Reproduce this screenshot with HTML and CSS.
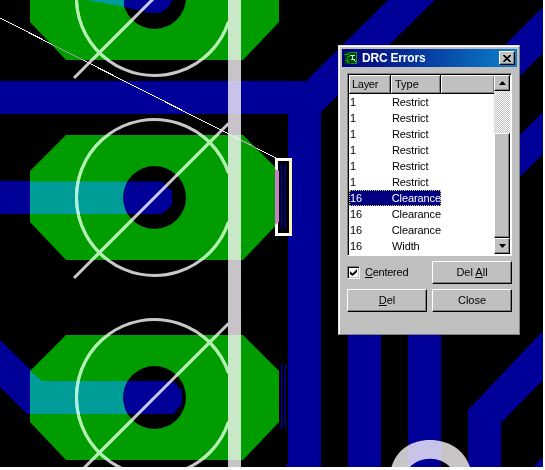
FILE: index.html
```
<!DOCTYPE html>
<html lang="en">
<head>
<meta charset="utf-8">
<title>DRC Errors</title>
<link rel="stylesheet" href="styles.css">
</head>
<body>
<main class="workspace">
<svg class="board" width="543" height="467" viewBox="0 0 543 467">
  <defs>
    <clipPath id="pad-clip"><path clip-rule="evenodd" d="M30 171L66 135H243L279 171V222L243 260H66L30 222ZM123 197.500A31.500 31.500 0 1 0 186 197.500A31.500 31.500 0 1 0 123 197.500Z"/></clipPath>
    <pattern id="hatch" width="6" height="5" patternUnits="userSpaceOnUse" x="281" y="364"><path d="M.5 0V5M4.500 0V5M1 4L4 1" stroke="#0000a8" fill="none"/></pattern>
    <g id="pad">
      <path fill="#009c00" d="M30 171L66 135H243L279 171V222L243 260H66L30 222Z"/>
      <circle cx="154.500" cy="197.500" r="31.500" fill="#000"/>
    </g>
    <g id="strokes" fill="none" stroke-width="3">
      <path d="M228.500 173A78 78 0 1 0 228.500 222"/>
      <path d="M74 278L228.500 123.500"/>
    </g>
    <g id="outline">
      <use href="#strokes" stroke="#c8c8c8"/>
      <g clip-path="url(#pad-clip)"><use href="#strokes" stroke="#b0dcb0"/></g>
    </g>
  </defs>
  <rect width="543" height="467" fill="#000"/>
  <g class="traces">
    <path d="M0 81H302L305 82L388 0H435L321 112V467H285L288 463V114H0Z"/>
    <path d="M0 181H162L172 191V205L162 214H0Z"/>
    <path d="M0 340L42 381H173L183 391V404L173 414H27L0 387Z"/>
    <path d="M348 330H381V467H348ZM408 330H441V467H408Z"/>
    <path d="M500 50L543 7V53L500 96ZM500 155L543 112V154L500 197Z"/>
    <path d="M468 410L543 331V380L501 423V467H468ZM533 467L543 457V467Z"/>
  </g>
  <use href="#pad" y="-200"/>
  <use href="#pad"/>
  <use href="#pad" y="200"/>
  <path fill="#009c98" d="M30 181.500H127.500Q119 197.500 127.500 214H30Z"/>
  <path fill="#009c98" d="M30 371L42 381H127.500Q119 397.500 127.500 414H30Z"/>
  <path fill="#009c98" d="M86 0H124V7Z"/>
  <g class="traces">
    <path d="M127.500 181.500H162L172 191V205L162 214H127.500Q119 197.500 127.500 181.500Z"/>
    <path d="M127.500 381H173L182 391V404L173 414H127.500Q119 397.500 127.500 381Z"/>
    <path d="M124 0V7L151 13H160L169 7L172 0Z"/>
  </g>
  <g class="overlay">
    <use href="#outline" y="-200"/>
    <use href="#outline"/>
    <use href="#outline" y="200"/>
    <path fill="#c8c3c8" d="M228 0H241V467H228Z"/>
    <path fill="#c8c4c8" d="M391.500 467C397 449 412 440 430 440S464 449 470 467H450C440 456 420 456 410 467Z"/>
  </g>
  <path d="M0 18L276 158" stroke="#eee" fill="none" shape-rendering="crispEdges"/>
  <path d="M52 44.400L83 60.100M241 140.200L257 148.400" stroke="#a0a0a0" fill="none" shape-rendering="crispEdges"/>
  <rect x="281" y="364" width="6" height="65" fill="url(#hatch)"/>
  <rect x="275" y="158" width="17" height="78" fill="#000"/>
  <rect x="281" y="164" width="6" height="65" fill="url(#hatch)"/>
  <rect x="276.500" y="159.500" width="14" height="75" fill="none" stroke="#fff" stroke-width="3"/>
  <path fill="#c880c8" d="M275 169L279 171V222L275 225Z"/>
  <path fill="#f8f4b0" d="M289 161H292V234H289Z"/>
</svg>

<section class="dialog">
  <header class="titlebar">
    <svg class="app-icon" width="14" height="14" viewBox="0 0 14 14"><path fill="#004000" d="M1 1H13V13H1Z"/><path fill="none" stroke="#009828" d="M0 3.500H5V1M3.500 12V5.500H6M1 9.500H5V13M12.500 1V12.500H7M6 1.500H12"/><path fill="none" stroke="#b8f0c8" d="M6 4.500H11M8.500 9V4M7 8.500H11M9 8L12 11"/></svg>
    <h1>DRC Errors</h1>
    <button class="close" aria-label="Close dialog"><svg width="8" height="7" viewBox="0 0 8 7"><path d="M.5 0L7.500 7M7.500 0L.5 7" stroke="#000" stroke-width="1.600"/></svg></button>
  </header>
  <div class="list">
    <div class="table">
      <div class="head"><span>Layer</span><span>Type</span><span></span></div>
      <div class="row"><span>1</span><span>Restrict</span></div>
      <div class="row"><span>1</span><span>Restrict</span></div>
      <div class="row"><span>1</span><span>Restrict</span></div>
      <div class="row"><span>1</span><span>Restrict</span></div>
      <div class="row"><span>1</span><span>Restrict</span></div>
      <div class="row"><span>1</span><span>Restrict</span></div>
      <div class="row selected"><span>16</span><span>Clearance</span></div>
      <div class="row"><span>16</span><span>Clearance</span></div>
      <div class="row"><span>16</span><span>Clearance</span></div>
      <div class="row"><span>16</span><span>Width</span></div>
    </div>
    <div class="scrollbar">
      <div class="arrow"><svg width="7" height="4" viewBox="0 0 7 4"><path d="M0 4L3.500 0L7 4Z"/></svg></div>
      <div class="track"></div>
      <div class="thumb"></div>
      <div class="arrow"><svg width="7" height="4" viewBox="0 0 7 4"><path d="M0 0L3.500 4L7 0Z"/></svg></div>
    </div>
  </div>
  <div class="actions">
    <label class="check"><span class="box"><svg width="7" height="7" viewBox="0 0 7 7"><path d="M0 2L2.500 4.500L7 0V3L2.500 7L0 5Z"/></svg></span><span><u>C</u>entered</span></label>
    <button class="btn">Del <u>A</u>ll</button>
    <button class="btn"><u>D</u>el</button>
    <button class="btn">Close</button>
  </div>
</section>
</main>
</body>
</html>
```
FILE: styles.css
```
* { box-sizing: border-box; }
body { margin: 0; background: #fff; font: 11px/16px "Liberation Sans", Arial, sans-serif; color: #000; overflow: hidden; }
.workspace { position: relative; width: 543px; height: 467px; }
.board { display: block; }
.traces { fill: #000098; }
.overlay { mix-blend-mode: screen; }

.dialog {
  position: absolute; left: 338px; top: 45px; width: 182px; height: 290px;
  padding: 3px 2px 0 3px; background: #c0c0c0;
  border: 1px solid; border-color: #e0e0e0 #808080 #808080 #e0e0e0;
  box-shadow: inset 1px 1px #fff;
}
.titlebar { display: flex; align-items: center; height: 18px; padding: 0 2px; background: linear-gradient(90deg, #000078, #0c80cc); }
.app-icon { display: block; }
.titlebar h1 { flex: 1; margin: 0 0 0 4px; font-size: 12px; line-height: 18px; font-weight: bold; letter-spacing: -.2px; color: #fff; }
button { padding: 0; font: inherit; color: #000; background: #c0c0c0; border-radius: 0; }
.close {
  display: grid; place-items: center; width: 16px; height: 14px;
  border: 1px solid; border-color: #fff #000 #000 #fff; box-shadow: inset -1px -1px #808080;
}

.list {
  display: flex; width: 165px; height: 183px; margin: 6px 0 0 5px; background: #fff;
  border: 1px solid; border-color: #808080 #fff #fff #808080; padding: 1px 1px 0 1px;
  box-shadow: inset 1px 1px #000;
}
.table { width: 145px; }
.head { display: flex; height: 19px; background: #c0c0c0; border-bottom: 1px solid #000; }
.head span { padding-left: 4px; line-height: 19px; height: 18px; border-right: 1px solid #000; box-shadow: inset 1px 1px #fff, inset -1px -1px #808080; }
.head span:nth-child(1) { width: 42px; padding-left: 3px; letter-spacing: -.3px; }
.head span:nth-child(2) { width: 50px; }
.head span:nth-child(3) { flex: 1; border-right: 0; }
.row { display: flex; width: 92px; height: 16px; line-height: 16px; white-space: nowrap; }
.row span:first-child { width: 43px; padding-left: 1px; }
.row span:last-child { letter-spacing: -.1px; }
.selected { background: #000080; color: #fff; outline: 1px dotted #d0d070; outline-offset: -1px; }

.scrollbar { display: flex; flex-direction: column; width: 16px; height: 179px; }
.arrow { display: grid; place-items: center; height: 16px; }
.arrow, .thumb { background: #c0c0c0; border: 1px solid; border-color: #fff #000 #000 #fff; box-shadow: inset -1px -1px #808080; }
.track { height: 42px; background: repeating-conic-gradient(#fff 0 25%, #c0c0c0 0 50%) 0 0 / 2px 2px; }
.thumb { flex: 1; }

.actions { display: grid; grid-template-columns: 80px 80px; grid-template-rows: 23px 23px; gap: 5px; margin: 5px 0 0 5px; }
.check { display: flex; align-items: center; gap: 5px; height: 22px; letter-spacing: -.25px; }
.box {
  display: grid; place-items: center; width: 13px; height: 13px; background: #fff;
  border: 1px solid; border-color: #808080 #fff #fff #808080; box-shadow: inset 1px 1px #000, inset -1px -1px #c0c0c0;
}
.btn { border: 1px solid; border-color: #fff #000 #000 #fff; box-shadow: inset -1px -1px #808080; line-height: 21px; }
u { text-underline-offset: 1px; }
```
